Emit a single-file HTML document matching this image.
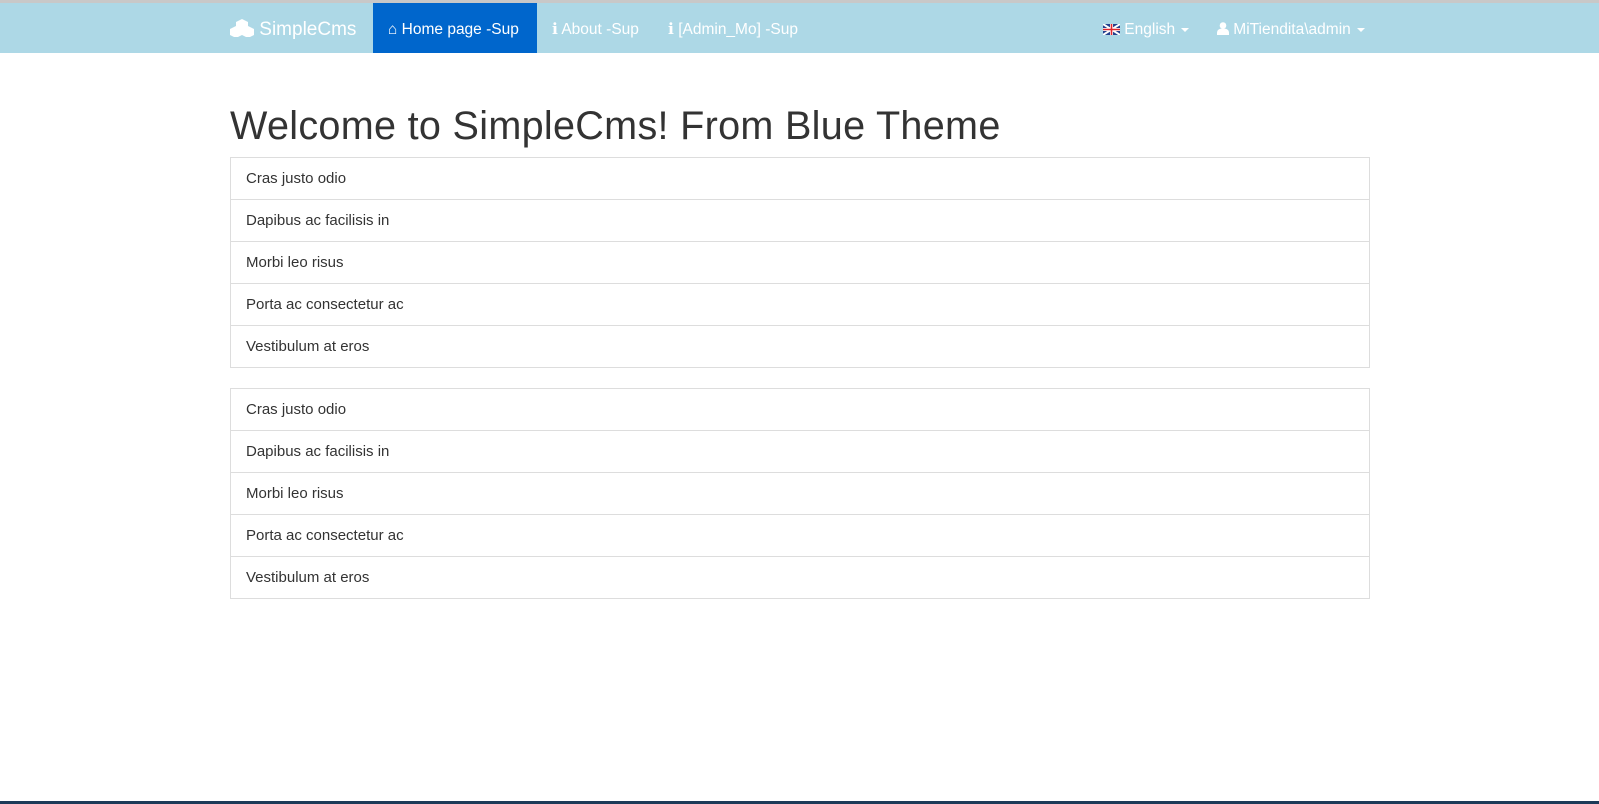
<!DOCTYPE html>
<html><head><meta charset="utf-8"><style>
*{box-sizing:border-box;margin:0;padding:0}
body{width:1599px;height:804px;background:#fff;font-family:"Liberation Sans",sans-serif;position:relative;overflow:hidden;color:#333}
.topb{position:absolute;left:0;top:0;width:1599px;height:3px;background:#c8c8c8}
.nav{position:absolute;left:0;top:3px;width:1599px;height:50px;background:#add8e6;color:#fff}
.nav .it{position:absolute;top:0;height:50px;line-height:54px;font-size:15.5px;color:#fff;white-space:nowrap}
.brand{font-size:19px!important}
.active{background:#0066cc}
.caret{display:inline-block;width:0;height:0;border-left:4px solid transparent;border-right:4px solid transparent;border-top:4px solid #fff;vertical-align:middle;margin-left:6px}
h1{position:absolute;left:230px;top:104px;font-size:39.6px;font-weight:normal;color:#333;letter-spacing:0.3px;white-space:nowrap}
.lg{position:absolute;left:230px;width:1140px;border:1px solid #ddd}
.lg div{height:42px;line-height:42px;padding-left:15px;font-size:15px;border-top:1px solid #ddd}
.lg div:first-child{border-top:none;height:41px}
.bot{position:absolute;left:0;top:801px;width:1599px;height:3px;background:#1c3a58}
</style></head><body>
<div class="topb"></div>
<div class="nav">
 <div class="it brand" style="left:230px"><svg width="24" height="18" viewBox="0 0 24 18" style="vertical-align:-2px"><g fill="#fff"><path d="M12 0l6 3v6l-6 3-6-3V3z"/><path d="M6 7l6 3v6l-6 3-6-3v-6z"/><path d="M18 7l6 3v6l-6 3-6-3v-6z"/></g></svg> SimpleCms</div>
 <div class="it active" style="left:373px;width:164px;padding-left:15px">&#8962; Home page -Sup</div>
 <div class="it" style="left:552px">&#8505; About -Sup</div>
 <div class="it" style="left:668px">&#8505; [Admin_Mo] -Sup</div>
 <div class="it" style="left:1103px"><svg width="17" height="11" viewBox="0 0 17 11" style="vertical-align:-1px"><rect width="17" height="11" fill="#24408e"/><path d="M0 0L17 11M17 0L0 11" stroke="#fff" stroke-width="2"/><path d="M8.5 0v11M0 5.5h17" stroke="#fff" stroke-width="3"/><path d="M8.5 0v11M0 5.5h17" stroke="#e0262e" stroke-width="1.6"/></svg> English<span class="caret"></span></div>
 <div class="it" style="left:1217px"><svg width="12" height="13" viewBox="0 0 12 13" style="vertical-align:-1px"><circle cx="6" cy="3.5" r="3.3" fill="#fff"/><path d="M0 13v-2c0-3 2-4.5 6-4.5s6 1.5 6 4.5v2z" fill="#fff"/></svg> MiTiendita\admin<span class="caret"></span></div>
</div>
<h1>Welcome to SimpleCms! From Blue Theme</h1>
<div class="lg" style="top:157px"><div>Cras justo odio</div><div>Dapibus ac facilisis in</div><div>Morbi leo risus</div><div>Porta ac consectetur ac</div><div>Vestibulum at eros</div></div>
<div class="lg" style="top:388px"><div>Cras justo odio</div><div>Dapibus ac facilisis in</div><div>Morbi leo risus</div><div>Porta ac consectetur ac</div><div>Vestibulum at eros</div></div>
<div class="bot"></div>
</body></html>
